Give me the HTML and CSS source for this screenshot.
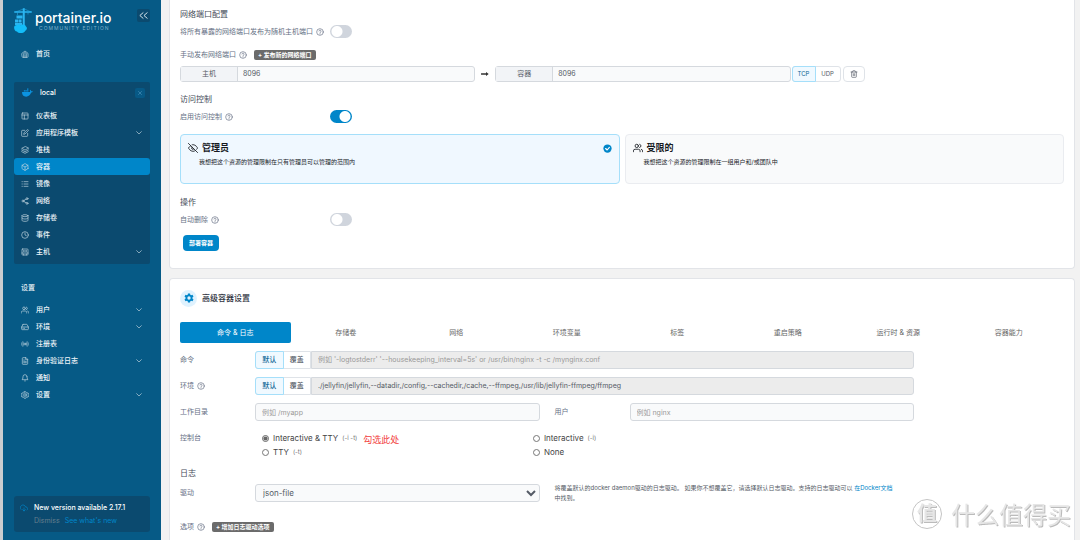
FILE: index.html
```html
<!DOCTYPE html>
<html lang="zh-CN">
<head>
<meta charset="utf-8">
<meta name="viewport" content="width=device-width, initial-scale=1">
<title>Portainer</title>
<link rel="stylesheet" href="styles.css">
</head>
<body>
<svg class="sprite" aria-hidden="true">
  <symbol id="home" viewBox="0 0 24 24"><path d="M3 10l9-7 9 7v10a2 2 0 0 1-2 2H5a2 2 0 0 1-2-2zM8 22V12a4 4 0 0 1 8 0v10M12 14v8"/></symbol>
  <symbol id="layout" viewBox="0 0 24 24"><rect x="3" y="3" width="18" height="18" rx="2"/><path d="M3 9h18M10 21V9"/></symbol>
  <symbol id="edit" viewBox="0 0 24 24"><path d="M11 4H4a2 2 0 0 0-2 2v14a2 2 0 0 0 2 2h14a2 2 0 0 0 2-2v-7M18.500 2.500a2.100 2.100 0 0 1 3 3L12 15l-4 1 1-4z"/></symbol>
  <symbol id="layers" viewBox="0 0 24 24"><path d="M12 2L2 7l10 5 10-5zM2 12l10 5 10-5M2 17l10 5 10-5"/></symbol>
  <symbol id="box" viewBox="0 0 24 24"><path d="M21 16V8a2 2 0 0 0-1-1.700l-7-4a2 2 0 0 0-2 0l-7 4A2 2 0 0 0 3 8v8a2 2 0 0 0 1 1.700l7 4a2 2 0 0 0 2 0l7-4a2 2 0 0 0 1-1.700zM3.300 7l8.700 5 8.700-5M12 22V12"/></symbol>
  <symbol id="list" viewBox="0 0 24 24"><path d="M9 5h12M9 12h12M9 19h12M3 5h1M3 12h1M3 19h1"/></symbol>
  <symbol id="share" viewBox="0 0 24 24"><circle cx="18" cy="5" r="3"/><circle cx="6" cy="12" r="3"/><circle cx="18" cy="19" r="3"/><path d="M8.600 13.500l6.800 4M15.400 6.500l-6.800 4"/></symbol>
  <symbol id="database" viewBox="0 0 24 24"><ellipse cx="12" cy="5" rx="9" ry="3"/><path d="M21 12c0 1.700-4 3-9 3s-9-1.300-9-3M3 5v14c0 1.700 4 3 9 3s9-1.300 9-3V5"/></symbol>
  <symbol id="clock" viewBox="0 0 24 24"><circle cx="12" cy="12" r="10"/><path d="M12 6v6l4 2"/></symbol>
  <symbol id="host" viewBox="0 0 24 24"><rect x="3" y="3" width="18" height="18" rx="2"/><path d="M3 15h18M8 7v4M12 7v4M16 7v4M8 18v3M16 18v3"/></symbol>
  <symbol id="users" viewBox="0 0 24 24"><path d="M17 21v-2a4 4 0 0 0-4-4H5a4 4 0 0 0-4 4v2M23 21v-2a4 4 0 0 0-3-3.900M16 3.100a4 4 0 0 1 0 7.800"/><circle cx="9" cy="7" r="4"/></symbol>
  <symbol id="drive" viewBox="0 0 24 24"><path d="M22 12H2M5.500 5.100L2 12v6a2 2 0 0 0 2 2h16a2 2 0 0 0 2-2v-6l-3.500-6.900A2 2 0 0 0 16.800 4H7.200a2 2 0 0 0-1.700 1.100zM6 16h1M10 16h1"/></symbol>
  <symbol id="radio" viewBox="0 0 24 24"><circle cx="12" cy="12" r="2"/><path d="M4.900 19C1 15 1 9 4.900 5M7.800 16.200a6 6 0 0 1 0-8.500M16.200 7.800a6 6 0 0 1 0 8.500M19.100 5C23 9 23 15 19.100 19"/></symbol>
  <symbol id="file" viewBox="0 0 24 24"><path d="M14 2H6a2 2 0 0 0-2 2v16a2 2 0 0 0 2 2h12a2 2 0 0 0 2-2V8zM14 2v6h6M16 13H8M16 17H8M10 9H8"/></symbol>
  <symbol id="bell" viewBox="0 0 24 24"><path d="M18 8A6 6 0 0 0 6 8c0 7-3 9-3 9h18s-3-2-3-9M13.700 21a2 2 0 0 1-3.400 0"/></symbol>
  <symbol id="settings" viewBox="0 0 24 24"><path d="M10 2h4l1 3 3 1.500 3-1 2 3.500-2 2.500v1L23 15l-2 3.500-3-1-3 1.500-1 3h-4l-1-3-3-1.500-3 1L1 15l2-2.500v-1L1 9l2-3.500 3 1L9 5z"/><circle cx="12" cy="12" r="4"/></symbol>
  <symbol id="chevron" viewBox="0 0 24 24"><path d="M5 8l7 7 7-7"/></symbol>
  <symbol id="collapse" viewBox="0 0 24 24"><path d="M11 18l-7-6 7-6M20 18l-7-6 7-6"/></symbol>
  <symbol id="close" viewBox="0 0 24 24"><path d="M18 6L6 18M6 6l12 12"/></symbol>
  <symbol id="cloud" viewBox="0 0 24 24"><path d="M8 17l4 4 4-4M12 12v9M20.900 18.100A5 5 0 0 0 18 9h-1.300A8 8 0 1 0 3 16.300"/></symbol>
  <symbol id="help" viewBox="0 0 24 24"><circle cx="12" cy="12" r="10"/><path d="M9 9a3 3 0 0 1 6 1c0 2-3 2.500-3 4M12 17v1"/></symbol>
  <symbol id="trash" viewBox="0 0 24 24"><path d="M3 6h18M19 6v14a2 2 0 0 1-2 2H7a2 2 0 0 1-2-2V6M8 6V4a2 2 0 0 1 2-2h4a2 2 0 0 1 2 2v2M10 11v6M14 11v6"/></symbol>
  <symbol id="eye-off" viewBox="0 0 24 24"><path d="M9.900 4.200A9 9 0 0 1 12 4c7 0 11 8 11 8a18 18 0 0 1-2.200 3.200M14.100 14.100a3 3 0 1 1-4.200-4.200M6.500 6.500A18 18 0 0 0 1 12s4 8 11 8a10 10 0 0 0 5.500-1.700M1 1l22 22"/></symbol>
  <symbol id="arrow" viewBox="0 0 24 24"><path d="M1 12h16" stroke-width="4"/><path d="M15 6l8 6-8 6z" fill="currentColor" stroke="none"/></symbol>
  <symbol id="gear" viewBox="0 0 24 24"><path fill="currentColor" fill-rule="evenodd" stroke="none" d="M9.500 1h5l.6 3.300 2 1.200 3.200-1.200 2.500 4.300-2.600 2.200v2.400l2.600 2.200-2.500 4.300-3.200-1.200-2 1.200-.6 3.300h-5l-.6-3.300-2-1.200-3.200 1.200-2.500-4.300 2.600-2.200v-2.400L1.200 8.600l2.500-4.300 3.200 1.200 2-1.200zM12 8a4 4 0 1 0 0 8 4 4 0 0 0 0-8z"/></symbol>
  <symbol id="check" viewBox="0 0 24 24"><circle cx="12" cy="12" r="11" fill="currentColor" stroke="none"/><path d="M7 12l4 4 6-7" stroke="#fff" stroke-width="3"/></symbol>
</svg>

<div class="app">
  <aside class="sidebar">
    <header class="brand">
      <svg class="crane" viewBox="0 0 36 50" aria-hidden="true">
        <path d="M19 0l2 0v45h-3V0zM1 6h34v2H1zM19 1L3 7M21 1l13 6M28 8v4" fill="#2bb5f0" stroke="#2bb5f0" stroke-width="1"/>
        <path d="M7 8v5" stroke="#2bb5f0"/>
        <path d="M5 14h7v6H5zM2 22h6v6H2zM9 22h6v6H9zM12 14h5v6h-5zM2 29h14v4H2z" fill="#2bb5f0"/>
        <path d="M1 35c3-3 7-1 8-3 3 0 4 2 6 1 4-2 8 0 9 3 3 2 2 7-1 8-2 6-14 7-17 2-5 0-7-7-5-11z" fill="#13bdf9"/>
      </svg>
      <div class="brand-text">
        <span class="brand-name">portainer.io</span>
        <span class="brand-edition">COMMUNITY EDITION</span>
      </div>
      <button class="square collapse" aria-label="收起侧栏"><svg class="icon"><use href="#collapse"/></svg></button>
    </header>

    <nav class="nav">
      <a class="item" href="#"><svg class="icon"><use href="#home"/></svg>首页</a>
      <div class="group">
        <div class="group-head">
          <svg class="whale" viewBox="0 0 24 18" aria-hidden="true"><path fill="#0b93e0" d="M11 0h3v3h-3zM4 4h3v3H4zM7.500 4h3v3h-3zM11 4h3v3h-3zM0 8h17c1-1 1-3 0-4l1-1c1 1 2 2 2 3 1 0 3 0 4 1-1 2-3 2-4 2-2 6-6 9-11 9-6 0-9-3-9-10z"/></svg>
          <span>local</span>
          <button class="square close" aria-label="关闭"><svg class="icon"><use href="#close"/></svg></button>
        </div>
        <a class="item" href="#"><svg class="icon"><use href="#layout"/></svg>仪表板</a>
        <a class="item" href="#"><svg class="icon"><use href="#edit"/></svg>应用程序模板<svg class="icon more"><use href="#chevron"/></svg></a>
        <a class="item" href="#"><svg class="icon"><use href="#layers"/></svg>堆栈</a>
        <a class="item active" href="#"><svg class="icon"><use href="#box"/></svg>容器</a>
        <a class="item" href="#"><svg class="icon"><use href="#list"/></svg>镜像</a>
        <a class="item" href="#"><svg class="icon"><use href="#share"/></svg>网络</a>
        <a class="item" href="#"><svg class="icon"><use href="#database"/></svg>存储卷</a>
        <a class="item" href="#"><svg class="icon"><use href="#clock"/></svg>事件</a>
        <a class="item" href="#"><svg class="icon"><use href="#host"/></svg>主机<svg class="icon more"><use href="#chevron"/></svg></a>
      </div>
      <div class="nav-title">设置</div>
      <a class="item" href="#"><svg class="icon"><use href="#users"/></svg>用户<svg class="icon more"><use href="#chevron"/></svg></a>
      <a class="item" href="#"><svg class="icon"><use href="#drive"/></svg>环境<svg class="icon more"><use href="#chevron"/></svg></a>
      <a class="item" href="#"><svg class="icon"><use href="#radio"/></svg>注册表</a>
      <a class="item" href="#"><svg class="icon"><use href="#file"/></svg>身份验证日志<svg class="icon more"><use href="#chevron"/></svg></a>
      <a class="item" href="#"><svg class="icon"><use href="#bell"/></svg>通知</a>
      <a class="item" href="#"><svg class="icon"><use href="#settings"/></svg>设置<svg class="icon more"><use href="#chevron"/></svg></a>
    </nav>

    <div class="update">
      <svg class="icon"><use href="#cloud"/></svg>
      <div>
        <div class="update-title">New version available 2.17.1</div>
        <div class="update-links"><button class="dismiss">Dismiss</button><a href="#">See what's new</a></div>
      </div>
    </div>
  </aside>

  <main class="main">
    <section class="card basic">
      <h2 class="title">网络端口配置</h2>
      <div class="row">
        <label class="label" for="publish-all">将所有暴露的网络端口发布为随机主机端口 <svg class="icon"><use href="#help"/></svg></label>
        <input class="toggle" type="checkbox" id="publish-all">
      </div>
      <div class="row">
        <span class="label auto">手动发布网络端口 <svg class="icon"><use href="#help"/></svg></span>
        <button class="tag">+ 发布新的网络端口</button>
      </div>
      <div class="ports">
        <div class="port"><label for="host-port">主机</label><input id="host-port" type="text" value="8096"></div>
        <svg class="icon"><use href="#arrow"/></svg>
        <div class="port"><label for="container-port">容器</label><input id="container-port" type="text" value="8096"></div>
        <div class="switch"><button class="on">TCP</button><button>UDP</button></div>
        <button class="trash" aria-label="删除"><svg class="icon"><use href="#trash"/></svg></button>
      </div>
      <h2 class="title">访问控制</h2>
      <div class="row">
        <label class="label" for="access">启用访问控制 <svg class="icon"><use href="#help"/></svg></label>
        <input class="toggle" type="checkbox" id="access" checked>
      </div>
      <div class="choices">
        <label class="choice selected">
          <input type="radio" name="owner" checked>
          <svg class="icon"><use href="#eye-off"/></svg>
          <span class="choice-title">管理员</span>
          <svg class="icon tick"><use href="#check"/></svg>
          <span class="choice-text">我想把这个资源的管理限制在只有管理员可以管理的范围内</span>
        </label>
        <label class="choice">
          <input type="radio" name="owner">
          <svg class="icon"><use href="#users"/></svg>
          <span class="choice-title">受限的</span>
          <span class="choice-text">我想把这个资源的管理限制在一组用户和/或团队中</span>
        </label>
      </div>
      <h2 class="title">操作</h2>
      <div class="row">
        <label class="label" for="auto-remove">自动删除 <svg class="icon"><use href="#help"/></svg></label>
        <input class="toggle" type="checkbox" id="auto-remove">
      </div>
      <button class="deploy">部署容器</button>
    </section>

    <section class="card advanced">
      <h2 class="card-head"><span class="badge"><svg class="icon"><use href="#gear"/></svg></span>高级容器设置</h2>
      <nav class="tabs">
        <a class="current" href="#">命令 &amp; 日志</a><a href="#">存储卷</a><a href="#">网络</a><a href="#">环境变量</a><a href="#">标签</a><a href="#">重启策略</a><a href="#">运行时 &amp; 资源</a><a href="#">容器能力</a>
      </nav>
      <div class="form">
        <label class="label" for="cmd">命令</label>
        <div class="combo wide">
          <div class="switch"><button class="on">默认</button><button>覆盖</button></div>
          <input id="cmd" type="text" disabled placeholder="例如 '-logtostderr' '--housekeeping_interval=5s' or /usr/bin/nginx -t -c /mynginx.conf">
        </div>
        <label class="label" for="entry">环境 <svg class="icon"><use href="#help"/></svg></label>
        <div class="combo wide">
          <div class="switch"><button class="on">默认</button><button>覆盖</button></div>
          <input id="entry" type="text" disabled value="./jellyfin/jellyfin,--datadir,/config,--cachedir,/cache,--ffmpeg,/usr/lib/jellyfin-ffmpeg/ffmpeg">
        </div>
        <label class="label" for="workdir">工作目录</label>
        <input class="field" id="workdir" type="text" placeholder="例如 /myapp">
        <label class="label second" for="user">用户</label>
        <input class="field" id="user" type="text" placeholder="例如 nginx">
        <span class="label">控制台</span>
        <div class="radios wide">
          <div><label><input type="radio" name="tty" checked>Interactive &amp; TTY <small>(-i -t)</small></label><span class="note">勾选此处</span></div>
          <div><label><input type="radio" name="tty">Interactive <small>(-i)</small></label></div>
          <div><label><input type="radio" name="tty">TTY <small>(-t)</small></label></div>
          <div><label><input type="radio" name="tty">None</label></div>
        </div>
      </div>
      <h2 class="title logs">日志</h2>
      <div class="form">
        <label class="label" for="driver">驱动</label>
        <select class="field" id="driver"><option>json-file</option></select>
        <p class="hint">将覆盖默认的docker daemon驱动的日志驱动。 如果你不想覆盖它，请选择默认日志驱动。支持的日志驱动可以 <a href="#">在Docker文档</a><span>中找到。</span></p>
      </div>
      <div class="row options">
        <span class="label auto">选项 <svg class="icon"><use href="#help"/></svg></span>
        <button class="tag">+ 增加日志驱动选项</button>
      </div>
    </section>
  </main>
</div>
<div class="watermark"><span class="seal">值</span>什么值得买</div>
</body>
</html>
```
FILE: styles.css
```css
* { box-sizing: border-box; }
body {
  margin: 0;
  background: #f2f2f2;
  color: #555b66;
  font: 7px/10px Inter, "Noto Sans CJK SC", sans-serif;
}
button, input, select { margin: 0; padding: 0; font: inherit; color: inherit; }
button { border: 0; background: none; cursor: pointer; }
a { color: #0086c9; text-decoration: none; }
h2, p { margin: 0; }
.sprite { position: absolute; width: 0; height: 0; }
.icon {
  width: 8px;
  height: 8px;
  flex: none;
  fill: none;
  stroke: currentColor;
  stroke-width: 2;
  stroke-linecap: round;
  stroke-linejoin: round;
}
.app { display: flex; min-height: 100vh; border-left: 3px solid #c9cdd0; }

.sidebar {
  display: flex;
  flex-direction: column;
  flex: none;
  width: 158px;
  padding: 8px 11px;
  background: #065a86;
  color: #e4edf3;
}
.brand { display: flex; align-items: flex-start; height: 37px; }
.crane { width: 18px; height: 26px; margin-right: 3px; }
.brand-text { display: flex; flex-direction: column; flex: 1; padding-top: 1px; }
.brand-name { color: #fff; font-size: 14px; font-weight: 500; line-height: 17px; }
.brand-edition { padding-left: 4px; color: #7fb0ca; font-size: 5px; line-height: 5px; letter-spacing: 1px; white-space: nowrap; }
.square { display: flex; align-items: center; justify-content: center; border-radius: 2px; }
.collapse { width: 13px; height: 13px; margin-top: 1px; background: #0b4a6f; }
.collapse .icon { width: 11px; height: 11px; }
.nav { display: flex; flex-direction: column; }
.item {
  display: flex;
  align-items: center;
  gap: 7px;
  height: 17px;
  padding: 0 7px;
  border-radius: 3px;
  color: #eef4f8;
  font-size: 7px;
  font-weight: 500;
}
.item .icon { color: #c3d6e1; }
.item .more { margin-left: auto; }
.active { background: #0086c9; }
.group { margin: 20px 0 15px; padding-bottom: 4px; background: #0b4a6f; border-radius: 2px; }
.group-head { display: flex; align-items: center; gap: 7px; height: 25px; padding: 0 5px 4px 8px; color: #fff; font-weight: 500; }
.whale { width: 11px; height: 9px; }
.close { width: 10px; height: 10px; margin-left: auto; background: #075986; color: #5fa5cc; }
.close .icon { width: 6px; height: 6px; }
.nav-title { height: 22px; padding: 4px 7px; font-weight: 500; }
.update {
  display: flex;
  gap: 6px;
  margin-top: auto;
  padding: 5px 6px;
  border-radius: 3px;
  background: #0b4a6f;
}
.update .icon { margin-top: 3px; color: #0086c9; }
.update-title { color: #fff; font-weight: 500; line-height: 13px; }
.update-links { display: flex; gap: 5px; line-height: 13px; }
.dismiss { color: #667f8e; }

.main { display: flex; flex: 1; flex-direction: column; gap: 9px; min-width: 0; padding: 0 5px 0 8px; }
.card { padding: 0 10px; background: #fff; border: 1px solid #e2e4e8; border-radius: 4px; }
.basic { padding-bottom: 17px; border-top: 0; border-radius: 0 0 4px 4px; }
.title { color: #454c59; font-size: 8px; font-weight: 400; line-height: 12px; }
.basic .title { padding-top: 8px; }
.row { display: flex; align-items: center; height: 23px; }
.label { display: flex; align-items: center; gap: 3px; width: 150px; color: #667085; white-space: nowrap; }
.auto { width: auto; margin-right: 7px; }
.toggle {
  width: 22px;
  height: 13px;
  border: 0;
  border-radius: 7px;
  appearance: none;
  background: radial-gradient(circle at 7px 50%, #fff 5px, transparent 6px) #d0d5dd;
}
.toggle:checked { background: radial-gradient(circle at 15px 50%, #fff 5px, transparent 6px) #0086c9; }
.tag { height: 10px; padding: 0 4px; border-radius: 2px; background: #6b6b6b; color: #fff; font-size: 6px; font-weight: 700; line-height: 10px; }
.ports { display: flex; align-items: center; height: 16px; margin-bottom: 3px; }
.ports > .icon { margin: 0 6px; color: #333; }
.port { display: flex; width: 33.400%; height: 16px; border: 1px solid #d5d9de; border-radius: 3px; background: #f9fafb; }
.port label { width: 57px; border-right: 1px solid #d5d9de; background: #f2f4f7; line-height: 14px; text-align: center; }
.port input { flex: 1; min-width: 0; padding: 0 5px; border: 0; background: none; }
.switch { display: flex; flex: none; border: 1px solid #dfe3e8; border-radius: 3px; background: #fff; }
.switch button { padding: 0 5px; }
.switch .on { margin: -1px 0 -1px -1px; border: 1px solid #a5dffa; border-radius: 3px 0 0 3px; background: #f0f9ff; color: #0f6796; }
.ports .switch { height: 16px; margin: 0 2px 0 1px; }
.ports .switch button { width: 24px; padding: 0; font-size: 6px; }
.trash { display: flex; align-items: center; justify-content: center; width: 22px; height: 16px; border: 1px solid #dfe3e8; border-radius: 4px; }

.choices { display: grid; grid-template-columns: 1fr 1fr; gap: 5px; margin: 6px 0 4px; }
.choice {
  display: grid;
  grid-template-columns: 9px auto 1fr;
  align-items: center;
  align-content: start;
  column-gap: 5px;
  min-height: 50px;
  padding: 6px 7px;
  border: 1px solid #eaecf0;
  border-radius: 4px;
  background: #f9fafb;
  color: #16191f;
}
.choice input { position: absolute; opacity: 0; }
.choice .icon { width: 10px; height: 10px; }
.choice-title { font-size: 9px; font-weight: 700; line-height: 14px; }
.choice-text { grid-column: 1 / -1; padding-left: 11px; font-size: 6px; line-height: 14px; }
.selected { border-color: #a5dffa; background: #f0f8ff; }
.choice .tick { width: 9px; height: 9px; justify-self: end; color: #0086c9; }
.deploy { display: block; height: 16px; margin: 4px 0 0 3px; padding: 0 6px; border-radius: 4px; background: #0086c9; color: #fff; font-size: 6px; font-weight: 700; }

.advanced { flex: 1; border-bottom: 0; border-radius: 4px 4px 0 0; }
.card-head { display: flex; align-items: center; gap: 5px; height: 38px; color: #30353f; font-size: 8px; font-weight: 500; }
.badge { display: flex; align-items: center; justify-content: center; width: 17px; height: 17px; border-radius: 50%; background: #dff2fe; color: #0086c9; }
.badge .icon { width: 10px; height: 10px; }
.tabs { display: grid; grid-template-columns: repeat(8, 1fr); margin: 5px 0 8px; line-height: 21px; text-align: center; }
.tabs a { color: #666; }
.tabs .current { border-radius: 2px; background: #0086c9; color: #fff; }
.form { display: grid; grid-template-columns: 75px 1fr 90px 1fr; align-items: center; row-gap: 8px; padding-right: 150px; }
.form .label { width: auto; }
.form .second { padding-left: 15px; }
.wide { grid-column: 2 / -1; }
.combo { display: flex; height: 18px; }
.combo .switch { width: 56px; border-radius: 3px 0 0 3px; }
.combo .switch button { flex: 1; font-weight: 500; }
.combo input { flex: 1; min-width: 0; padding: 0 6px; border: 1px solid #d5d9de; border-radius: 0 3px 3px 0; background: #ececec; }
.field { width: 100%; height: 18px; padding: 0 6px; border: 1px solid #d5d9de; border-radius: 3px; background: #f9fafb; }
input::placeholder { color: #999; opacity: 1; }
select.field { padding: 0 3px; font-size: 8px; }
.radios { display: grid; grid-template-columns: 42% 1fr; padding: 2px 7px 0; font-size: 8px; line-height: 14px; }
.radios > div { display: flex; height: 14px; }
.radios label { display: flex; align-items: center; gap: 4px; color: #444; }
.radios input { width: 7px; height: 7px; accent-color: #666; }
.radios small { color: #777; font-size: 6px; }
.note { margin-left: 6px; color: #f23c3c; font-size: 9px; line-height: 18px; }
.form > span.label { align-self: start; padding-top: 4px; }
.logs { padding-top: 8px; margin-bottom: 4px; }
.hint { grid-column: 3 / -1; padding: 0 20px 0 15px; font-size: 6px; }
.hint a, .hint span { display: inline-block; }
.options { margin-top: 12px; }

.watermark {
  position: fixed;
  right: 9px;
  bottom: 10px;
  display: flex;
  align-items: center;
  gap: 9px;
  color: #e6e6e6;
  font: 24px/32px "Noto Sans CJK SC", sans-serif;
  text-shadow: 1px 1px #bbb;
}
.seal { width: 30px; height: 30px; border: 1px solid #c4c4c4; border-radius: 50%; font-size: 20px; font-weight: 700; line-height: 26px; text-align: center; }
```
